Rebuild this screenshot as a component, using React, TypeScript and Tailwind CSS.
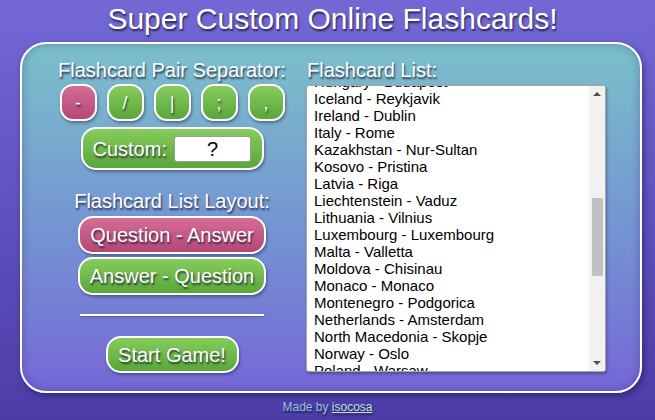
const countries = [
  "Hungary - Budapest",
  "Iceland - Reykjavik",
  "Ireland - Dublin",
  "Italy - Rome",
  "Kazakhstan - Nur-Sultan",
  "Kosovo - Pristina",
  "Latvia - Riga",
  "Liechtenstein - Vaduz",
  "Lithuania - Vilnius",
  "Luxembourg - Luxembourg",
  "Malta - Valletta",
  "Moldova - Chisinau",
  "Monaco - Monaco",
  "Montenegro - Podgorica",
  "Netherlands - Amsterdam",
  "North Macedonia - Skopje",
  "Norway - Oslo",
  "Poland - Warsaw",
];

const shadow = "[text-shadow:1px_2px_2px_rgba(20,20,50,0.8)]";
const red =
  "bg-gradient-to-b from-[#d46d97] to-[#b44774] shadow-[1px_2px_3px_rgba(30,30,70,0.45)]";
const green =
  "bg-gradient-to-b from-[#86cc5c] to-[#5aa639] shadow-[1px_2px_3px_rgba(30,30,70,0.45)]";

function SepButton({ label, active }: { label: string; active?: boolean }) {
  return (
    <button
      className={`w-[37px] h-[37px] rounded-[13px] border-2 border-white text-white text-[18px] leading-none ${shadow} ${
        active ? red : green
      }`}
    >
      {label}
    </button>
  );
}

export default function App() {
  return (
    <div
      className="min-h-[420px] flex flex-col bg-gradient-to-b from-[#7468d6] to-[#4c3ca8] text-white"
      style={{ fontFamily: '"Liberation Sans", Arial, sans-serif' }}
    >
      <h1 className={`h-[42px] flex items-center justify-center text-[30px] leading-none pb-[4px] pl-[10px] ${shadow}`}>
        Super Custom Online Flashcards!
      </h1>

      <div className="ml-[20px] w-[622px] h-[351px] rounded-[26px] border-2 border-white bg-gradient-to-b from-[#7bc0c9] via-[#7597d2] to-[#7467d6] shadow-[inset_0_0_10px_rgba(40,40,110,0.35),2px_3px_6px_rgba(20,10,60,0.45)] flex pl-[32px] pt-[15px] gap-[16px]">
        <div className="w-[236px] flex flex-col items-center">
          <div className={`text-[20px] leading-[23px] ${shadow}`}>Flashcard Pair Separator:</div>
          <div className="mt-[2px] flex gap-[10px]">
            <SepButton label="-" active />
            <SepButton label="/" />
            <SepButton label="|" />
            <SepButton label=";" />
            <SepButton label="," />
          </div>
          <div
            className={`mt-[6px] w-[183px] h-[43px] rounded-[15px] border-2 border-white flex items-center pl-[10px] gap-[7px] ${green}`}
          >
            <span className={`text-[20px] ${shadow}`}>Custom:</span>
            <div className="w-[77px] h-[26px] bg-white border border-[#9a9a9a] rounded-[3px] text-black text-[20px] leading-[24px] text-center">
              ?
            </div>
          </div>

          <div className={`mt-[20px] text-[20px] leading-[23px] ${shadow}`}>Flashcard List Layout:</div>
          <button
            className={`mt-[3px] w-[188px] h-[38px] rounded-[15px] border-2 border-white text-[20px] ${shadow} ${red}`}
          >
            Question - Answer
          </button>
          <button
            className={`mt-[3px] w-[188px] h-[38px] rounded-[15px] border-2 border-white text-[20px] ${shadow} ${green}`}
          >
            Answer - Question
          </button>

          <div className="mt-[19px] w-[184px] h-[2px] bg-white shadow-[0_1px_2px_rgba(30,30,70,0.4)]" />

          <button
            className={`mt-[20px] w-[133px] h-[37px] rounded-[15px] border-2 border-white text-[20px] ${shadow} ${green}`}
          >
            Start Game!
          </button>
        </div>

        <div className="w-[300px] flex flex-col">
          <div className={`text-[20px] leading-[23px] pl-[1px] ${shadow}`}>Flashcard List:</div>
          <div className="mt-[3px] h-[287px] bg-white border border-[#a6a6a6] rounded-[3px] shadow-[1px_2px_3px_rgba(30,30,70,0.4)] flex overflow-hidden">
            <div className="flex-1 overflow-hidden pl-[7px]">
              <div className="-mt-[13px] text-black text-[15px] leading-[17px]">
                {countries.map((c) => (
                  <div key={c} className="whitespace-nowrap">
                    {c}
                  </div>
                ))}
              </div>
            </div>
            <div className="w-[16px] bg-[#f1f1f1] flex flex-col items-center">
              <div className="h-[16px] flex items-center justify-center">
                <div className="w-0 h-0 border-l-[4px] border-r-[4px] border-b-[4px] border-l-transparent border-r-transparent border-b-[#505050]" />
              </div>
              <div className="mt-[96px] w-[11px] h-[78px] bg-[#c1c1c1]" />
              <div className="flex-1" />
              <div className="h-[16px] flex items-center justify-center">
                <div className="w-0 h-0 border-l-[4px] border-r-[4px] border-t-[4px] border-l-transparent border-r-transparent border-t-[#505050]" />
              </div>
            </div>
          </div>
        </div>
      </div>

      <div className={`h-[27px] flex items-center justify-center text-[12px] text-[#8ec4e2] ${shadow}`}>
        <span>
          Made by <a className="underline text-[#b9e6d6]">isocosa</a>
        </span>
      </div>
    </div>
  );
}
